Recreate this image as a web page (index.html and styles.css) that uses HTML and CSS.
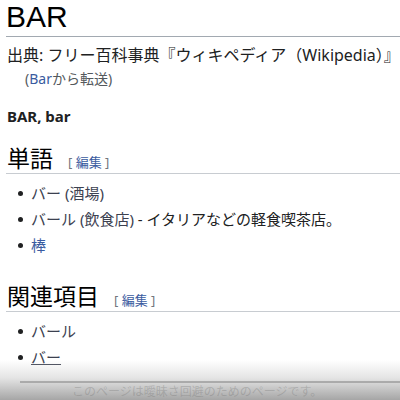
FILE: index.html
```html
<!DOCTYPE html>
<html lang="ja">
<head>
<meta charset="utf-8">
<link rel="stylesheet" href="styles.css">
</head>
<body>
<div class="page">
  <h1 class="title">BAR</h1>
  <div class="source">出典: フリー百科事典『ウィキペディア（Wikipedia）』</div>
  <div class="redirect">(<a class="link" href="#">Bar</a>から転送)</div>
  <p class="lead"><b>BAR, bar</b></p>

  <h2 class="section">単語<span class="edit"><span class="br">[</span> <a href="#">編集</a> <span class="br">]</span></span></h2>
  <ul class="list">
    <li><span><a class="vlink" href="#">バー (酒場)</a></span></li>
    <li><span><a class="vlink" href="#">バール (飲食店)</a> - イタリアなどの軽食喫茶店。</span></li>
    <li><span><a class="link" href="#">棒</a></span></li>
  </ul>

  <h2 class="section section2">関連項目<span class="edit"><span class="br">[</span> <a href="#">編集</a> <span class="br">]</span></span></h2>
  <ul class="list">
    <li><span><a class="vlink" href="#">バール</a></span></li>
    <li><span><a class="vlink hover" href="#">バー</a></span></li>
  </ul>
</div>
<div class="fade">
  <div class="fade-line"></div>
  <div class="fade-text">このページは曖昧さ回避のためのページです。</div>
</div>
</body>
</html>
```

FILE: styles.css
```css
html, body {
  margin: 0;
  padding: 0;
  background: #fff;
  height: 400px;
  overflow: hidden;
}
body {
  position: relative;
  font-family: "Noto Sans", "Noto Sans CJK JP", sans-serif;
  color: #202122;
}
.page {
  padding: 0 0 0 6px;
}
a {
  text-decoration: none;
}
.title {
  margin: 0;
  font-family: "Liberation Sans", "Noto Sans", sans-serif;
  font-size: 30px;
  font-weight: normal;
  line-height: 34px;
  color: #000;
  padding-bottom: 2px;
  border-bottom: 1px solid #a2a9b1;
}
.source {
  margin-top: 8px;
  font-size: 16px;
  line-height: 20px;
  padding-left: 1px;
  white-space: nowrap;
}
.redirect {
  font-size: 14px;
  line-height: 20px;
  color: #54595d;
  padding-left: 19px;
  margin-top: 4px;
}
.link {
  color: #3a5ba0;
}
.vlink {
  color: #3c4150;
}
.hover {
  text-decoration: underline;
}
.lead {
  margin: 17px 0 0;
  font-size: 15px;
  line-height: 20px;
  padding-left: 1px;
}
.section {
  margin: 18px 0 0;
  font-size: 23px;
  font-weight: normal;
  line-height: 28px;
  color: #000;
  padding-bottom: 1px;
  border-bottom: 1px solid #c8ccd1;
  padding-left: 1px;
}
.section2 {
  margin-top: 24px;
}
.edit {
  margin-left: 15px;
  font-size: 13px;
  line-height: 1;
  color: #72777d;
}
.edit a {
  color: #3a5ba0;
}
.list {
  list-style: none;
  margin: 6px 0 0;
  padding: 0;
}
.list li {
  display: flex;
  align-items: center;
  font-size: 15px;
  line-height: 26px;
  height: 26px;
  margin-left: 12px;
  white-space: nowrap;
}
.list li::before {
  content: "";
  width: 5px;
  height: 5px;
  border-radius: 50%;
  background: #202122;
  margin-right: 8px;
  flex: none;
}
.fade {
  position: absolute;
  left: 0;
  right: 0;
  bottom: 0;
  height: 40px;
  background: linear-gradient(to bottom, rgba(255,255,255,0) 0%, rgba(210,210,210,0.6) 45%, rgba(150,150,150,0.85) 100%);
}
.fade-line {
  position: absolute;
  left: 20px;
  right: 0;
  top: 21px;
  height: 2px;
  background: rgba(140,140,140,0.6);
}
.fade-text {
  position: absolute;
  left: 72px;
  top: 24px;
  font-size: 12px;
  line-height: 16px;
  color: rgba(110,110,110,0.3);
  white-space: nowrap;
}
```
